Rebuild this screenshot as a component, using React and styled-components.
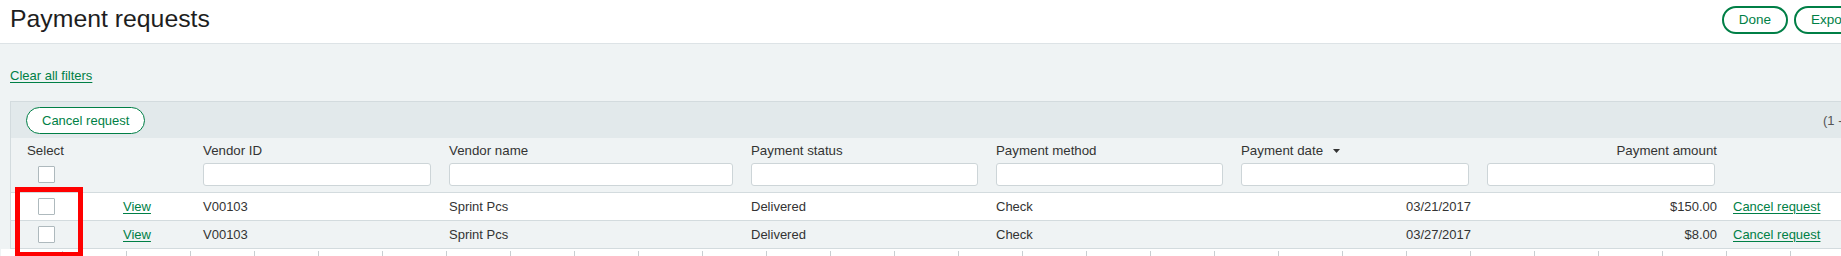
import React from "react";
import styled, { createGlobalStyle } from "styled-components";

const GREEN = "#007f46";
const LINE = "#d3dbde";
const COLS = "104px 80px 246px 302px 245px 245px 246px 246px 1fr";

const Global = createGlobalStyle`
  html, body { margin: 0; padding: 0; background: #eff3f4; overflow: hidden; }
  body { font-family: "Liberation Sans", Arial, sans-serif; color: #333; }
  * { box-sizing: border-box; }
`;

const Page = styled.div`
  position: relative;
  width: 1900px;
  height: 256px;
  overflow: hidden;
`;

const TopBar = styled.header`
  height: 44px;
  background: #fff;
  border-bottom: 1px solid #dde3e6;
  display: flex;
  align-items: flex-start;
  justify-content: space-between;
  padding: 4px 33px 0 10px;
`;

const Title = styled.h1`
  margin: 0;
  font-size: 24.8px;
  line-height: 30px;
  font-weight: 400;
  color: #1e1e1e;
`;

const Actions = styled.div`
  display: flex;
  gap: 6px;
  margin-top: 2px;
`;

const PillButton = styled.button`
  font-family: inherit;
  font-size: ${(p) => (p.$small ? "13px" : "13.5px")};
  color: ${GREEN};
  background: #fff;
  border: ${(p) => (p.$small ? "1px" : "2px")} solid ${GREEN};
  border-radius: 999px;
  height: ${(p) => (p.$small ? "27px" : "28px")};
  padding: 0 15px;
  line-height: 1;
  cursor: pointer;
`;

const FilterBar = styled.div`
  height: 57px;
  padding: 22px 10px 0;
`;

const Link = styled.a`
  color: ${GREEN};
  font-size: 13px;
  line-height: 16px;
  text-decoration: underline;
  text-underline-offset: 2px;
  cursor: pointer;
`;

const Panel = styled.section`
  margin-left: 10px;
  width: 1890px;
  border-top: 1px solid ${LINE};
  border-left: 1px solid ${LINE};
`;

const Toolbar = styled.div`
  height: 36px;
  background: #e2e9eb;
  display: flex;
  align-items: center;
  justify-content: space-between;
  padding: 0 17px 0 15px;
`;

const Pager = styled.span`
  font-size: 13px;
  color: #555;
`;

const Row = styled.div`
  display: grid;
  grid-template-columns: ${COLS};
  background: ${(p) => (p.$white ? "#fff" : "#eff3f4")};
  border-bottom: 1px solid ${LINE};
  height: ${(p) => (p.$head ? "55px" : "28px")};
  padding: ${(p) => (p.$head ? "5px 0 6px" : "0")};
  align-items: ${(p) => (p.$head ? "start" : "center")};
`;

const HeadCell = styled.div`
  display: flex;
  flex-direction: column;
  gap: 4px;
  padding: 0 8px 0 ${(p) => (p.$first ? "16px" : "8px")};
  align-items: ${(p) => (p.$right ? "flex-end" : "stretch")};
`;

const Label = styled.div`
  font-size: 13.3px;
  line-height: 16px;
  color: #333;
  white-space: nowrap;
  display: flex;
  align-items: center;
  gap: 10px;
`;

const FilterSlot = styled.div`
  height: 23px;
  display: flex;
  align-items: center;
  width: ${(p) => (p.$full ? "100%" : "auto")};
`;

const FilterInput = styled.input`
  height: 23px;
  width: calc(100% - 2px);
  border: 1px solid #cdd5d8;
  border-radius: 3px;
  background: #fff;
  padding: 0 6px;
  font-family: inherit;
  font-size: 13px;
`;

const Check = styled.span`
  display: inline-block;
  width: 17px;
  height: 17px;
  border: 1px solid #aeb9bd;
  border-radius: 1px;
  background: #fff;
  margin-left: 11px;
`;

const Cell = styled.div`
  font-size: 13px;
  line-height: 16px;
  color: #333;
  white-space: nowrap;
  padding: 0 8px 0 ${(p) => (p.$first ? "16px" : "8px")};
  display: flex;
  align-items: center;
  justify-content: ${(p) => (p.$right ? "flex-end" : "flex-start")};
`;

const SortArrow = styled.svg`
  width: 7px;
  height: 4px;
  flex: 0 0 auto;
`;

const TickStrip = styled.div`
  height: 8px;
  margin-left: -10px;
  width: 1910px;
  background-color: #fff;
  background-image: linear-gradient(to right, #c8cfd2 1px, transparent 1px);
  background-size: 64px 6px;
  background-position: 125px 2px;
  background-repeat: repeat-x;
`;

const Highlight = styled.div`
  position: absolute;
  left: 15px;
  top: 187px;
  width: 68px;
  height: 70px;
  border: 5px solid #ff0000;
  pointer-events: none;
`;

const columns = [
  { key: "id", label: "Vendor ID" },
  { key: "name", label: "Vendor name" },
  { key: "status", label: "Payment status" },
  { key: "method", label: "Payment method" },
  { key: "date", label: "Payment date", sort: true },
  { key: "amount", label: "Payment amount", right: true },
];

const rows = [
  { id: "V00103", name: "Sprint Pcs", status: "Delivered", method: "Check", date: "03/21/2017", amount: "$150.00" },
  { id: "V00103", name: "Sprint Pcs", status: "Delivered", method: "Check", date: "03/27/2017", amount: "$8.00" },
];

export default function App() {
  return (
    <>
      <Global />
      <Page>
        <TopBar>
          <Title>Payment requests</Title>
          <Actions>
            <PillButton>Done</PillButton>
            <PillButton>Export</PillButton>
          </Actions>
        </TopBar>
        <FilterBar>
          <Link>Clear all filters</Link>
        </FilterBar>
        <Panel>
          <Toolbar>
            <PillButton $small>Cancel request</PillButton>
            <Pager>(1 - 2 of 2)</Pager>
          </Toolbar>
          <Row $head>
            <HeadCell $first>
              <Label>Select</Label>
              <FilterSlot>
                <Check />
              </FilterSlot>
            </HeadCell>
            <HeadCell />
            {columns.map((c) => (
              <HeadCell key={c.key} $right={c.right}>
                <Label>
                  {c.label}
                  {c.sort && (
                    <SortArrow viewBox="0 0 7 4">
                      <path d="M0 0h7L3.5 4z" fill="#333" />
                    </SortArrow>
                  )}
                </Label>
                <FilterSlot $full>
                  <FilterInput />
                </FilterSlot>
              </HeadCell>
            ))}
            <HeadCell />
          </Row>
          {rows.map((r, i) => (
            <Row key={i} $white={i % 2 === 0}>
              <Cell $first>
                <Check />
              </Cell>
              <Cell>
                <Link>View</Link>
              </Cell>
              <Cell>{r.id}</Cell>
              <Cell>{r.name}</Cell>
              <Cell>{r.status}</Cell>
              <Cell>{r.method}</Cell>
              <Cell $right>{r.date}</Cell>
              <Cell $right>{r.amount}</Cell>
              <Cell>
                <Link>Cancel request</Link>
              </Cell>
            </Row>
          ))}
          <TickStrip />
        </Panel>
        <Highlight />
      </Page>
    </>
  );
}
